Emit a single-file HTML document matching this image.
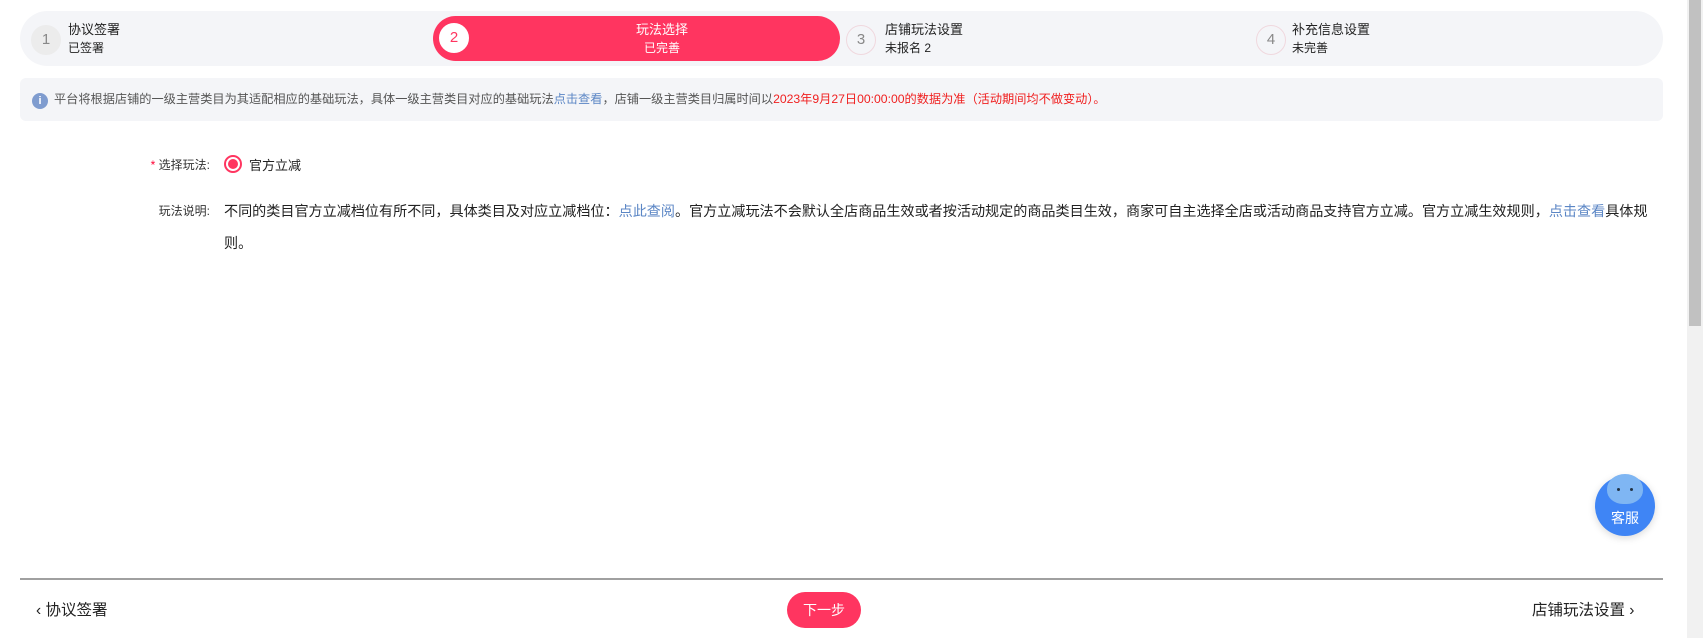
<!DOCTYPE html>
<html><head><meta charset="utf-8"><style>
*{margin:0;padding:0;box-sizing:border-box}
body{width:1703px;height:638px;background:#fff;font-family:"Liberation Sans","Noto Sans CJK SC",sans-serif;color:#222;position:relative;overflow:hidden}
.abs{position:absolute}
.bar{left:20px;top:11px;width:1643px;height:55px;background:#f4f5f8;border-radius:28px}
.circ{width:30px;height:30px;border-radius:50%;border:1px solid #f0d8de;background:#f4f5f8;color:#888;font-size:15px;text-align:center;line-height:28px}
.t{font-size:13px;color:#222;line-height:18px}
.pill{left:433px;top:16px;width:407px;height:45px;background:#ff3560;border-radius:23px}
.info{left:20px;top:78px;width:1643px;height:43px;background:#f4f5f8;border-radius:6px;font-size:12.2px;color:#555;line-height:43px;padding-left:34px;white-space:nowrap}
.desc{left:224px;top:195px;width:1430px;font-size:14.1px;line-height:32px;color:#222}
a{color:#5b86c5;text-decoration:none}
</style></head><body>
<div class="abs bar"></div>
<div class="abs circ" style="left:31px;top:25px;background:#ececec;border-color:#ececec">1</div>
<div class="abs t" style="left:68px;top:21px">协议签署<br><span style="font-size:12px">已签署</span></div>
<div class="abs pill"></div>
<div class="abs circ" style="left:439px;top:23px;background:#fff;border-color:#fff;color:#ff3560">2</div>
<div class="abs t" style="left:600px;width:124px;top:21px;color:#fff;text-align:center">玩法选择<br><span style="font-size:12px">已完善</span></div>
<div class="abs circ" style="left:846px;top:25px">3</div>
<div class="abs t" style="left:885px;top:21px">店铺玩法设置<br><span style="font-size:12px">未报名 2</span></div>
<div class="abs circ" style="left:1256px;top:25px">4</div>
<div class="abs t" style="left:1292px;top:21px">补充信息设置<br><span style="font-size:12px">未完善</span></div>

<div class="abs info">平台将根据店铺的一级主营类目为其适配相应的基础玩法，具体一级主营类目对应的基础玩法<a>点击查看</a>，店铺一级主营类目归属时间以<span style="color:#f02020">2023年9月27日00:00:00的数据为准（活动期间均不做变动）。</span></div>
<div class="abs" style="left:32px;top:93px;width:16px;height:16px;border-radius:50%;background:#7f9ccf;color:#fff;font-size:11px;text-align:center;line-height:16px;font-weight:bold">i</div>

<div class="abs" style="left:140px;top:156px;width:70px;text-align:right;font-size:12px;color:#333"><span style="color:#f03">*</span> 选择玩法:</div>
<div class="abs" style="left:224px;top:155px;width:18px;height:18px;border-radius:50%;border:2px solid #ff3560;background:#fff"></div>
<div class="abs" style="left:228px;top:159px;width:10px;height:10px;border-radius:50%;background:#ff3560"></div>
<div class="abs" style="left:249px;top:155px;font-size:13px">官方立减</div>
<div class="abs" style="left:140px;top:202px;width:70px;text-align:right;font-size:12px;color:#333">玩法说明:</div>
<div class="abs desc">不同的类目官方立减档位有所不同，具体类目及对应立减档位：<a>点此查阅</a>。官方立减玩法不会默认全店商品生效或者按活动规定的商品类目生效，商家可自主选择全店或活动商品支持官方立减。官方立减生效规则，<a>点击查看</a>具体规则。</div>

<div class="abs" style="left:1595px;top:476px;width:60px;height:60px;border-radius:50%;background:#3f85f5;box-shadow:0 2px 8px rgba(0,0,0,.15);color:#fff;font-size:14px;text-align:center;padding-top:32px">客服</div>
<div class="abs" style="left:1607px;top:474px;width:36px;height:30px;border-radius:50% 50% 45% 45%;background:#7fb6f3"></div>
<div class="abs" style="left:1617px;top:488px;width:3px;height:3px;background:#234;border-radius:50%"></div>
<div class="abs" style="left:1630px;top:488px;width:3px;height:3px;background:#234;border-radius:50%"></div>

<div class="abs" style="left:20px;top:578px;width:1643px;height:2px;background:#a0a0a0"></div>
<div class="abs" style="left:36px;top:598px;font-size:15.5px">‹ 协议签署</div>
<div class="abs" style="left:787px;top:592px;width:74px;height:36px;border-radius:18px;background:#ff3560;color:#fff;font-size:14px;text-align:center;line-height:36px">下一步</div>
<div class="abs" style="left:1532px;top:598px;font-size:15.5px">店铺玩法设置 ›</div>

<div class="abs" style="left:1687px;top:0;width:16px;height:638px;background:#f1f1f1"></div>
<div class="abs" style="left:1689px;top:0;width:12px;height:326px;background:#c1c1c1"></div>
</body></html>
